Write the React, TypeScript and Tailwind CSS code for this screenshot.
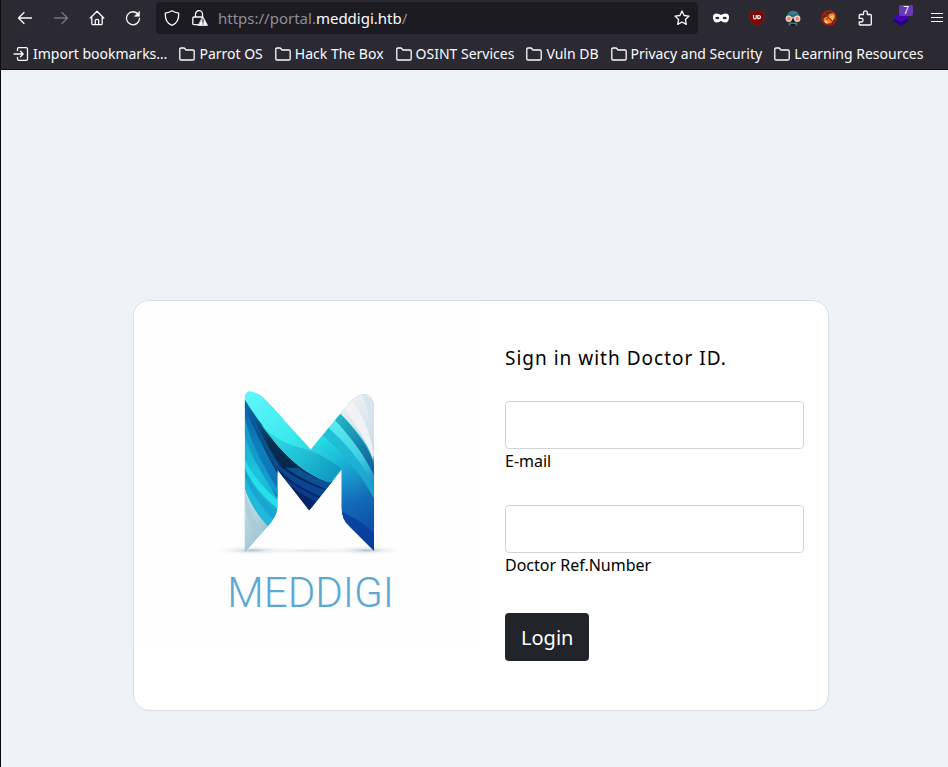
import type { ReactNode } from 'react';

const folders = [
  'Parrot OS',
  'Hack The Box',
  'OSINT Services',
  'Vuln DB',
  'Privacy and Security',
  'Learning Resources',
];

function Icon({ children, size = 16 }: { children: ReactNode; size?: number }) {
  return (
    <svg
      width={size}
      height={size}
      viewBox="0 0 16 16"
      fill="none"
      stroke="currentColor"
      strokeWidth="1.3"
      strokeLinecap="round"
      strokeLinejoin="round"
      aria-hidden="true"
      className="shrink-0"
    >
      {children}
    </svg>
  );
}

function ToolButton({ label, children, disabled }: { label: string; children: ReactNode; disabled?: boolean }) {
  return (
    <button
      type="button"
      aria-label={label}
      disabled={disabled}
      className="relative flex h-8 w-9 shrink-0 items-center justify-center text-[#fbfbfe] disabled:text-[#77767e]"
    >
      {children}
    </button>
  );
}

function Toolbar() {
  return (
    <div className="flex h-9 items-center pl-[6px]">
      <ToolButton label="Back">
        <Icon><path d="M1.5 8H14.5M7 2.5 1.5 8 7 13.5" /></Icon>
      </ToolButton>
      <ToolButton label="Forward" disabled>
        <Icon><path d="M14.5 8H1.5M9 2.5 14.5 8 9 13.5" /></Icon>
      </ToolButton>
      <ToolButton label="Home">
        <Icon><path d="M1.2 8 8 1.3 14.8 8M2.8 6.7V13.5Q2.8 14.7 4 14.7H12Q13.2 14.7 13.2 13.5V6.7M6.3 14.5V10.3Q6.3 9.3 8 9.3T9.7 10.3V14.5" /></Icon>
      </ToolButton>
      <ToolButton label="Reload">
        <Icon>
          <path d="M13.3 4.5A6.5 6.5 0 1 0 14.5 8.5" />
          <path d="M14.5 1.5V6.3H9.7Z" fill="currentColor" strokeWidth=".6" />
        </Icon>
      </ToolButton>
      <div className="ml-[5px] flex h-8 min-w-0 flex-1 items-center rounded bg-[#1c1b22] pl-2 pr-2 text-[#fbfbfe]">
        <Icon><path d="M8 .8C6 2 4 2.700 1.300 3.200 1 9 3 13.500 8 15.300 13 13.500 15 9 14.700 3.200 12 2.700 10 2 8 .8Z" /></Icon>
        <span className="ml-3 flex">
          <Icon>
            <path d="M3.500 7V4.200A3.500 3.500 0 0 1 10.500 4.200V7M6 14.700H2Q.8 14.700 .8 13.500V8.200Q.8 7 2 7H10" />
            <path d="M11 7 15.500 15.400H6.500Z" fill="currentColor" strokeWidth=".8" />
            <path d="M11 9.500V12.200M11 13.800V14" stroke="#1c1b22" strokeWidth="1.200" />
          </Icon>
        </span>
        <div className="relative ml-[10px] h-6 min-w-0 flex-1 text-[15px] leading-6">
          <input
            aria-label="Address"
            defaultValue="https://portal.meddigi.htb/"
            className="absolute inset-0 w-full bg-transparent text-transparent outline-none"
          />
          <span aria-hidden="true" className="pointer-events-none whitespace-nowrap text-[#8f8f96]">
            https://portal.<span className="text-[#fbfbfe]">meddigi.htb</span>/
          </span>
        </div>
        <button type="button" aria-label="Bookmark this page">
          <Icon><path d="m8 1 2.100 4.500 4.900.6-3.600 3.400.9 4.900L8 12l-4.300 2.400.9-4.900L1 6.100l4.900-.6Z" /></Icon>
        </button>
      </div>
      <div className="ml-[5px] flex">
        <ToolButton label="Private mask">
          <svg width="18" height="18" viewBox="0 0 18 18" aria-hidden="true">
            <path d="M1 8Q1 4.500 4.500 4.500 7 4.500 9 6 11 4.500 13.500 4.500 17 4.500 17 8 17 13.500 13 13.500 10.500 13.500 9 11.800 7.500 13.500 5 13.500 1 13.500 1 8Z" fill="#fff" />
            <ellipse cx="5.300" cy="9" rx="2" ry="1.300" fill="#2b2a33" />
            <ellipse cx="12.700" cy="9" rx="2" ry="1.300" fill="#2b2a33" />
          </svg>
        </ToolButton>
        <ToolButton label="Content blocker">
          <svg width="16" height="16" viewBox="0 0 16 16" aria-hidden="true">
            <path d="M8 .5C6 2 3.500 2.400 1 2.400V7C1 11 4 14 8 15.500 12 14 15 11 15 7V2.400C12.500 2.400 10 2 8 .5Z" fill="#800000" stroke="#a31c20" strokeWidth=".6" />
            <path d="M4.500 5V7.500Q4.500 9 5.800 9T7.200 7.500V5M8.800 5.500V8.700H9.800Q11.500 8.700 11.500 7.100T9.800 5.500Z" fill="none" stroke="#fff" strokeWidth="1.200" />
          </svg>
        </ToolButton>
        <ToolButton label="User agent disguise">
          <svg width="16" height="16" viewBox="0 0 16 16" aria-hidden="true">
            <path d="M1.500 8Q1.500 1 8 .8 14.500 1 14.500 8Z" fill="#387d8b" />
            <path d="M3 3 8 5.500 13 3 11.500 6.500H4.500Z" fill="#27626f" />
            <path d="M3 10H13V15.500H3Z" fill="#17171c" />
            <path d="M3.500 12.500H12.500V15.500H10.500V14H5.500V15.500H3.500Z" fill="#43818a" />
            <circle cx="3.800" cy="8.800" r="2.600" fill="#ff806b" stroke="#f4d9d5" strokeWidth="1.200" />
            <circle cx="12.200" cy="8.800" r="2.600" fill="#ff806b" stroke="#f4d9d5" strokeWidth="1.200" />
            <path d="M6.500 8H9.500" stroke="#e8e8e8" />
          </svg>
        </ToolButton>
        <ToolButton label="Cookie remover">
          <svg width="16" height="16" viewBox="0 0 16 16" aria-hidden="true">
            <circle cx="8" cy="8" r="6.700" fill="#493125" />
            <path d="M2.500 9Q4 6 7 6.500L8 4 10 3.500 13.500 3 14 8 11.500 10.500 10.500 13 6 14 3 12Z" fill="#f58a16" />
            <path d="M8 7 13 5 12 9 8 9Z" fill="#ffc45a" />
            <path d="M3.500 11 5.500 10.500 7 12.500 5 13.500ZM10 9 12.500 8 12 11Z" fill="#ece1cf" />
            <circle cx="6" cy="9" r=".8" fill="#3c2c28" />
            <path d="M3 3 13 13" stroke="#cf1111" strokeWidth="1.200" />
            <circle cx="8" cy="8" r="7.200" fill="none" stroke="#d21212" strokeWidth="1.200" />
          </svg>
        </ToolButton>
        <ToolButton label="Extensions">
          <Icon><path d="M2.200 6.500V5.500Q2.200 4.500 3.200 4.500H6.500V2.800A1.900 1.900 0 0 1 10.300 2.800V4.500H13.300Q14.300 4.500 14.300 5.500V14Q14.300 15 13.300 15H3.200Q2.200 15 2.200 14V12H4.300A1.800 1.800 0 0 0 4.300 8.400H2.200Z" /></Icon>
        </ToolButton>
        <ToolButton label="Wappalyzer">
          <svg width="16" height="16" viewBox="0 0 16 16" aria-hidden="true">
            <path d="M0 10.500 8 6 16 10.500 8 16Z" fill="#24008a" />
            <path d="M0 7 8 2 16 7 8 12.500Z" fill="#4608ad" />
          </svg>
          <span className="absolute left-[16px] top-[3px] h-[11px] w-[14px] rounded-xs bg-[#6639b6] text-center text-[10px] leading-[11px]">7</span>
        </ToolButton>
        <button type="button" aria-label="Application menu" className="flex h-8 w-[29px] items-center justify-center pl-[7px] text-[#fbfbfe]">
          <svg width="12" height="16" viewBox="0 0 12 16" stroke="currentColor" aria-hidden="true">
            <path d="M0 3.500H12M0 7.500H12M0 11.500H12" />
          </svg>
        </button>
      </div>
    </div>
  );
}

function Bookmarks() {
  return (
    <nav className="flex h-[33px] items-center gap-3 overflow-hidden whitespace-nowrap pl-3 pt-0.5 text-sm text-[#fbfbfe]">
      <a href="#import" className="flex items-center gap-1">
        <Icon>
          <path d="M4.500 4.500V3Q4.500 1.700 5.800 1.700H13.200Q14.500 1.700 14.500 3V13Q14.500 14.300 13.200 14.300H5.800Q4.500 14.300 4.500 13V11.500M1 8H10M7.500 5.300 10.200 8 7.500 10.700" />
        </Icon>
        Import bookmarks…
      </a>
      {folders.map((name) => (
        <a key={name} href="#bookmark" className="flex items-center gap-1">
          <Icon>
            <path d="M.8 12.800V3.200Q.8 2 2 2H5.200L7 4H14Q15.200 4 15.200 5.200V12.800Q15.200 14 14 14H2Q.8 14 .8 12.800Z" />
          </Icon>
          {name}
        </a>
      ))}
    </nav>
  );
}

function Logo() {
  return (
    <svg viewBox="0 0 346 346" className="block w-full bg-[#fefefe]" role="img" aria-label="MEDDIGI">
      <defs>
        <clipPath id="m-shape">
          <path d="M103 514V62Q104 32 120 33C148 37 169 62 186 81L301 207 401 86Q432 42 464 41 490 46 490 84V510L413 433Q393 414 393 380V268L296 390 201 268V380Q201 405 172 437Z" />
        </clipPath>
        <linearGradient id="aqua" gradientUnits="userSpaceOnUse" x1="120" y1="50" x2="370" y2="300">
          <stop offset="0" stopColor="#5df6fa" />
          <stop offset=".5" stopColor="#3ae8ee" />
          <stop offset="1" stopColor="#13b4cf" />
        </linearGradient>
        <linearGradient id="aqua-under" gradientUnits="userSpaceOnUse" x1="160" y1="130" x2="350" y2="300">
          <stop offset="0" stopColor="#33e3ee" />
          <stop offset=".6" stopColor="#20bfd3" />
          <stop offset="1" stopColor="#129bc2" />
        </linearGradient>
        <linearGradient id="navy" gradientUnits="userSpaceOnUse" x1="110" y1="90" x2="300" y2="380">
          <stop offset="0" stopColor="#0868ad" />
          <stop offset=".35" stopColor="#062f50" />
          <stop offset=".65" stopColor="#07264f" />
          <stop offset="1" stopColor="#06246c" />
        </linearGradient>
        <linearGradient id="right-leg" gradientUnits="userSpaceOnUse" x1="340" y1="180" x2="470" y2="500">
          <stop offset="0" stopColor="#22dbe5" />
          <stop offset=".28" stopColor="#1ba9d2" />
          <stop offset=".6" stopColor="#1369b7" />
          <stop offset="1" stopColor="#0a429f" />
        </linearGradient>
        <linearGradient id="left-leg" gradientUnits="userSpaceOnUse" x1="103" y1="130" x2="205" y2="400">
          <stop offset="0" stopColor="#14a8cf" />
          <stop offset=".5" stopColor="#1cc3dc" />
          <stop offset="1" stopColor="#19a9d2" />
        </linearGradient>
        <linearGradient id="blue-edge" gradientUnits="userSpaceOnUse" x1="103" y1="60" x2="200" y2="330">
          <stop offset="0" stopColor="#0a62aa" />
          <stop offset=".5" stopColor="#0c80bd" />
          <stop offset="1" stopColor="#0f6fb4" />
        </linearGradient>
        <linearGradient id="teal-stripe" gradientUnits="userSpaceOnUse" x1="380" y1="110" x2="490" y2="270">
          <stop offset="0" stopColor="#25b6c6" />
          <stop offset=".6" stopColor="#167fa9" />
          <stop offset="1" stopColor="#125f9c" />
        </linearGradient>
        <linearGradient id="light-stripe" gradientUnits="userSpaceOnUse" x1="360" y1="130" x2="490" y2="310">
          <stop offset="0" stopColor="#5cecf0" />
          <stop offset=".6" stopColor="#3fcfe4" />
          <stop offset="1" stopColor="#1b92c8" />
        </linearGradient>
        <linearGradient id="pale" x1="0" y1="0" x2=".6" y2="1">
          <stop offset="0" stopColor="#cfe4eb" />
          <stop offset="1" stopColor="#97c1d1" />
        </linearGradient>
        <linearGradient id="tip" gradientUnits="userSpaceOnUse" x1="420" y1="60" x2="490" y2="240">
          <stop offset="0" stopColor="#eceff1" />
          <stop offset="1" stopColor="#b9dae5" />
        </linearGradient>
        <radialGradient id="shadow">
          <stop offset="0" stopColor="#8096aa" stopOpacity=".65" />
          <stop offset=".45" stopColor="#b7c7d5" stopOpacity=".28" />
          <stop offset="1" stopColor="#dce5ed" stopOpacity="0" />
        </radialGradient>
      </defs>
      <g transform="translate(76 79) scale(.33333)">
        <ellipse cx="125" cy="509" rx="110" ry="14" fill="url(#shadow)" />
        <ellipse cx="470" cy="509" rx="110" ry="14" fill="url(#shadow)" />
        <ellipse cx="296" cy="510" rx="225" ry="12" fill="url(#shadow)" opacity=".4" />
        <g clipPath="url(#m-shape)">
          <path d="M300 20H510V530H300Z" fill="url(#right-leg)" />
          <path d="M90 40H220V530H90Z" fill="url(#left-leg)" />
          <path d="M103 50C125 120 160 210 205 275V362C170 300 122 215 103 110Z" fill="url(#blue-edge)" />
          <path d="M103 110C122 190 160 260 204 330V350C158 290 120 225 103 160Z" fill="#129bca" />
          <path d="M103 236C125 288 165 325 204 362V386C160 352 124 310 103 262Z" fill="#27dfe8" />
          <path d="M103 262C130 325 165 365 200 395L190 415C150 375 120 330 103 290Z" fill="#1aa5d1" />
          <path d="M103 290C125 345 160 388 188 416L174 440C135 400 112 355 103 322Z" fill="#1fb9da" />
          <path d="M103 322C118 370 145 408 177 441L103 520Z" fill="url(#pale)" />
          <path d="M103 322C115 380 135 425 158 458L140 476C118 440 108 400 103 370Z" fill="#a9cbd8" opacity=".7" />
          <path d="M103 48C140 110 163 140 206 197 252 257 310 286 368 302L296 397 201 278C170 225 125 130 103 82Z" fill="url(#navy)" />
          <path d="M103 50C116 105 160 205 203 275L205 250C165 190 130 110 103 50Z" fill="#0b5ea5" opacity=".7" />
          <path d="M201 250C240 285 285 308 344 329L330 347C278 328 230 295 201 262Z" fill="#0b4596" />
          <path d="M225 262C262 290 305 308 346 326L362 306C330 300 295 285 262 262Z" fill="#1068b0" opacity=".65" />
          <path d="M215 286C250 315 290 335 325 353L317 363C280 347 245 322 215 290Z" fill="#0a3c8c" />
          <path d="M103 25H200L301 207 341 157C379 191 412 224 438 270L393 263 360 306C294 291 226 229 183 172 145 120 121 88 103 57Z" fill="url(#aqua)" />
          <path d="M150 132C190 172 230 195 290 208 330 220 365 245 393 262L360 306C290 285 227 231 183 172Z" fill="url(#aqua-under)" />
          <path d="M315 188 335 163C385 210 440 265 490 355V510L393 440V268C375 235 345 210 315 188Z" fill="url(#right-leg)" />
          <path d="M335 163 353 141C405 188 455 245 490 320V355C450 275 392 212 335 163Z" fill="#1eb5d2" opacity=".7" />
          <path d="M353 141 372 118C420 168 465 225 490 285V320C455 245 405 189 353 141Z" fill="url(#light-stripe)" />
          <path d="M372 118 388 99C430 142 472 195 490 250V285C462 225 420 168 372 118Z" fill="url(#teal-stripe)" />
          <path d="M388 99 450 30H500V250C474 195 432 142 388 99Z" fill="url(#tip)" />
          <path d="M420 55C455 100 478 155 488 215V240C468 185 435 130 402 84Z" fill="#f4f3f4" opacity=".9" />
          <path d="M450 35C472 80 486 140 490 200V60Z" fill="#cfe3ea" opacity=".7" />
          <path d="M393 392C425 410 460 425 490 460V520L400 435Z" fill="#073b9c" opacity=".75" />
        </g>
      </g>
      <text x="93" y="305" fill="#5ba8d7" className="font-[Roboto] text-[42px] font-light">MEDDIGI</text>
    </svg>
  );
}

function Field({ id, label, type }: { id: string; label: string; type: string }) {
  return (
    <div>
      <input
        id={id}
        type={type}
        className="block h-12 w-full rounded border border-[#ced4da] bg-white px-4 text-xl outline-none focus:border-blue-300"
      />
      <label htmlFor={id} className="block leading-6">{label}</label>
    </div>
  );
}

function LoginCard() {
  return (
    <div className="grid w-full max-w-[696px] grid-cols-2 overflow-hidden rounded-2xl border border-[#dadde0] bg-white">
      <div>
        <Logo />
      </div>
      <form className="px-6 pb-[47px] pt-11 text-black" onSubmit={(e) => e.preventDefault()}>
        <h1 className="mb-[30px] text-[19px] leading-[26px] tracking-[1px]">Sign in with Doctor ID.</h1>
        <div className="flex flex-col gap-8">
          <Field id="email" label="E-mail" type="email" />
          <Field id="reference" label="Doctor Ref.Number" type="text" />
        </div>
        <button type="submit" className="mt-9 h-12 rounded bg-[#212529] px-4 pt-0.5 text-xl text-white">
          Login
        </button>
      </form>
    </div>
  );
}

export default function App() {
  return (
    <div className="flex min-h-screen flex-col border-l border-[#0c0c0d] bg-[#eef3f8] font-['Noto_Sans',sans-serif]">
      <header className="border-b border-[#0c0c0d] bg-[#2b2a33]">
        <Toolbar />
        <Bookmarks />
      </header>
      <main className="flex flex-1 justify-center pb-14 pl-[13px] pt-[230px]">
        <LoginCard />
      </main>
    </div>
  );
}
